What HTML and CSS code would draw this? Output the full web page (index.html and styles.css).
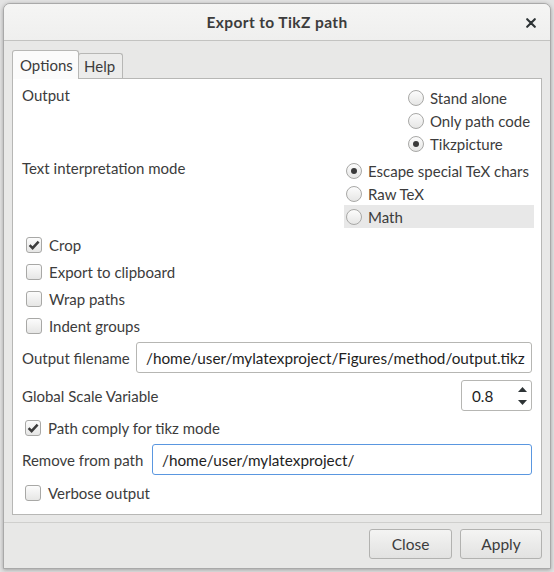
FILE: index.html
```html
<!DOCTYPE html>
<html>
<head>
<meta charset="utf-8">
<link rel="stylesheet" href="styles.css">
</head>
<body>
<div class="window">
  <div class="titlebar">
    <span class="title">Export to TikZ path</span>
    <span class="close-x"><svg width="10" height="10" viewBox="0 0 10 10"><path d="M1.2 1.2 L8.8 8.8 M8.8 1.2 L1.2 8.8" stroke="#2e3436" stroke-width="2.1" stroke-linecap="round"/></svg></span>
  </div>
  <div class="body">
    <div class="tabs">
      <div class="tab active">Options</div>
      <div class="tab">Help</div>
    </div>
    <div class="panel">
      <div class="opt-row">
        <div class="label">Output</div>
        <div class="radios out">
          <div class="radio-item"><span class="radio"></span><span>Stand alone</span></div>
          <div class="radio-item"><span class="radio"></span><span>Only path code</span></div>
          <div class="radio-item"><span class="radio on"></span><span>Tikzpicture</span></div>
        </div>
      </div>
      <div class="opt-row second">
        <div class="label">Text interpretation mode</div>
        <div class="radios mode">
          <div class="radio-item"><span class="radio on"></span><span>Escape special TeX chars</span></div>
          <div class="radio-item"><span class="radio"></span><span>Raw TeX</span></div>
          <div class="radio-item hover"><span class="radio"></span><span>Math</span></div>
        </div>
      </div>
      <div class="checks">
        <div class="check-item"><span class="check on"><svg width="16" height="16" viewBox="0 0 16 16"><path d="M3.6 8.2 L6.6 11.2 L12.6 4.6" fill="none" stroke="#3c3c3c" stroke-width="2.5"/></svg></span><span>Crop</span></div>
        <div class="check-item"><span class="check"></span><span>Export to clipboard</span></div>
        <div class="check-item"><span class="check"></span><span>Wrap paths</span></div>
        <div class="check-item"><span class="check"></span><span>Indent groups</span></div>
      </div>
      <div class="field-row fname">
        <span class="flabel">Output filename</span>
        <div class="input">/home/user/mylatexproject/Figures/method/output.tikz</div>
      </div>
      <div class="field-row scale">
        <span class="flabel">Global Scale Variable</span>
        <div class="spin">
          <span class="spin-val">0.8</span>
          <span class="spin-arrows">
            <svg width="9" height="5" viewBox="0 0 9 5"><path d="M0 5 L4.5 0 L9 5 Z" fill="#2e3436"/></svg>
            <svg width="9" height="5" viewBox="0 0 9 5"><path d="M0 0 L9 0 L4.5 5 Z" fill="#2e3436"/></svg>
          </span>
        </div>
      </div>
      <div class="check-item tight comply"><span class="check on"><svg width="16" height="16" viewBox="0 0 16 16"><path d="M3.6 8.2 L6.6 11.2 L12.6 4.6" fill="none" stroke="#3c3c3c" stroke-width="2.5"/></svg></span><span>Path comply for tikz mode</span></div>
      <div class="field-row remove">
        <span class="flabel">Remove from path</span>
        <div class="input focus">/home/user/mylatexproject/</div>
      </div>
      <div class="check-item tight verbose"><span class="check"></span><span>Verbose output</span></div>
    </div>
    <div class="sep"></div>
    <div class="buttons">
      <div class="btn close">Close</div>
      <div class="btn apply">Apply</div>
    </div>
  </div>
</div>
</body>
</html>
```
FILE: styles.css
```css
html, body {
  margin: 0;
  padding: 0;
}
body {
  background: #e3e3e3;
  width: 554px;
  height: 572px;
  overflow: hidden;
  font-family: "Lato", "Open Sans", sans-serif;
  font-size: 15px;
  color: #3c3c3c;
}
.window {
  margin: 3px 0 0 3px;
  width: 546px;
  height: 564px;
  border: 1px solid #a9a9a9;
  border-radius: 7px 7px 0 0;
  background: #e8e8e7;
  box-shadow: 0 1px 4px rgba(0,0,0,0.3);
  display: flex;
  flex-direction: column;
  overflow: hidden;
}
.titlebar {
  height: 36px;
  flex: none;
  border-bottom: 1px solid #c3c3c1;
  background: linear-gradient(#f5f5f4, #efefee);
  display: flex;
  align-items: center;
  justify-content: center;
  position: relative;
}
.title {
  font-weight: bold;
  font-size: 15.5px;
  letter-spacing: 0.4px;
  color: #3c3c3c;
  margin-top: 0;
}
.close-x {
  position: absolute;
  right: 14px;
  top: 14px;
  display: flex;
}
.body {
  flex: 1;
  display: flex;
  flex-direction: column;
  padding: 10px 8px 0 8px;
}
.tabs {
  display: flex;
  align-items: flex-end;
  height: 27px;
  position: relative;
  z-index: 1;
}
.tab {
  height: 24px;
  padding: 0 7px 0 5px;
  border: 1px solid #b7b7b5;
  border-bottom: none;
  border-radius: 3px 3px 0 0;
  background: #ececeb;
  display: flex;
  align-items: center;
  margin-left: -1px;
}
.tab.active {
  height: 28px;
  margin-left: 0;
  margin-bottom: -1px;
  padding: 0 7px 0 7px;
  background: #fbfbfb;
  border-color: #b7b7b5;
  width: 51px;
}
.panel {
  height: 428px;
  flex: none;
  background: #ffffff;
  border: 1px solid #b7b7b5;
  padding: 7px 9px 0 9px;
  box-sizing: content-box;
  display: flex;
  flex-direction: column;
}
.opt-row {
  display: flex;
  justify-content: space-between;
  align-items: flex-start;
}
.opt-row.second {
  margin-top: 4px;
}
.label {
  line-height: 18px;
}
.radios {
  display: flex;
  flex-direction: column;
}
.radios.out {
  width: 124px;
}
.radios.mode {
  width: 190px;
  margin-right: -2px;
}
.radio-item {
  height: 23px;
  display: flex;
  align-items: center;
  gap: 6px;
  white-space: nowrap;
}
.radios.mode .radio-item {
  padding-left: 2px;
}
.radio-item.hover {
  background: #e8e8e8;
}
.radio {
  width: 14px;
  height: 14px;
  border: 1px solid #a8a8a6;
  border-radius: 50%;
  background: linear-gradient(#fcfcfc, #e6e6e5);
  display: flex;
  align-items: center;
  justify-content: center;
  flex: none;
}
.radio.on::after {
  content: "";
  width: 6px;
  height: 6px;
  border-radius: 50%;
  background: #3a3a3a;
}
.checks {
  margin-top: 3px;
  display: flex;
  flex-direction: column;
}
.check-item {
  height: 27px;
  display: flex;
  align-items: center;
  gap: 7px;
  padding-left: 4px;
}
.check {
  width: 14px;
  height: 14px;
  border: 1px solid #a8a8a6;
  border-radius: 3px;
  background: linear-gradient(#fcfcfc, #e6e6e5);
  flex: none;
  position: relative;
}
.check svg {
  position: absolute;
  left: -1px;
  top: -1px;
}
.field-row {
  display: flex;
  align-items: center;
  gap: 5px;
}
.fname {
  margin-top: 3px;
}
.fname .flabel {
  width: 109px;
  flex: none;
  white-space: nowrap;
}
.remove .flabel {
  width: 125px;
  flex: none;
  white-space: nowrap;
}
.input {
  flex: 1;
  height: 29px;
  border: 1px solid #b6b6b3;
  border-radius: 3px;
  background: #fff;
  display: flex;
  align-items: center;
  padding-left: 9px;
  color: #1e1e1e;
  font-size: 15.3px;
  white-space: nowrap;
  overflow: hidden;
}
.input.focus {
  border-color: #5a97e0;
}
.scale {
  margin-top: 7px;
  justify-content: space-between;
}
.spin {
  height: 29px;
  border: 1px solid #b6b6b3;
  border-radius: 3px;
  background: #fff;
  display: flex;
  align-items: center;
  justify-content: space-between;
  padding: 0 4px 0 10px;
  box-sizing: content-box;
  width: 55px;
}
.spin-val {
  color: #1e1e1e;
  font-size: 15.3px;
}
.spin-arrows {
  display: flex;
  flex-direction: column;
  justify-content: space-between;
  height: 18px;
}
.comply {
  margin-top: 3px;
  padding-left: 3px;
}
.remove {
  margin-top: 3px;
}
.verbose {
  margin-top: 4px;
  padding-left: 3px;
}
.sep {
  margin-top: 7px;
  height: 1px;
  background: #cfcfcd;
  margin-left: -8px;
  margin-right: -8px;
}
.buttons {
  display: flex;
  justify-content: flex-end;
  gap: 8px;
  margin-top: 6px;
}
.btn {
  height: 28px;
  border: 1px solid #b2b2b0;
  border-radius: 3px;
  background: linear-gradient(#f4f4f3, #e2e2e1);
  display: flex;
  align-items: center;
  justify-content: center;
  font-size: 15.5px;
}
.btn.close {
  width: 81px;
}
.btn.apply {
  width: 80px;
}
```
